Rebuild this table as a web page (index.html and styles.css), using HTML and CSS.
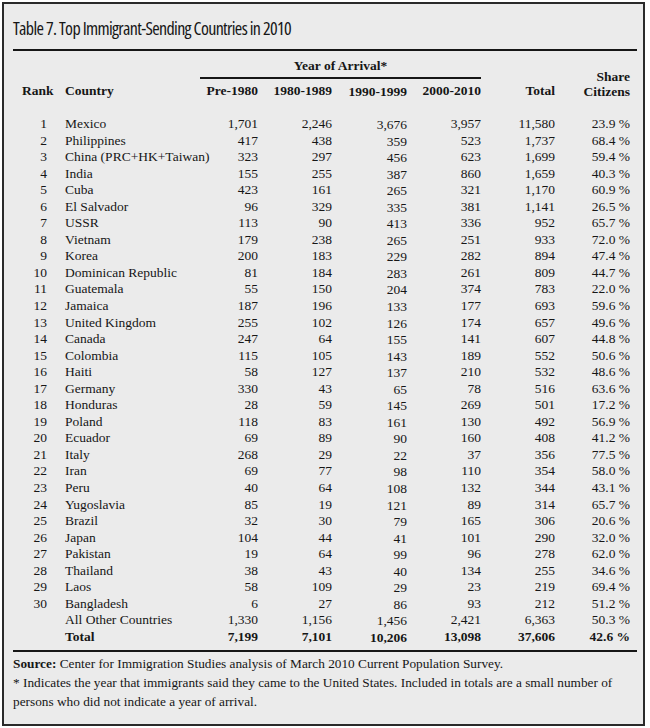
FILE: index.html
```html
<!DOCTYPE html>
<html lang="en">
<head>
<meta charset="utf-8">
<title>Table 7</title>
<link rel="stylesheet" href="styles.css">
</head>
<body>
<div class="frame">
  <h1 class="title">Table 7. Top Immigrant-Sending Countries in 2010</h1>
  <table class="data">
    <colgroup>
      <col class="w-rank"><col class="w-country"><col class="w-pre"><col class="w-80"><col class="w-90"><col class="w-00"><col class="w-total"><col class="w-share">
    </colgroup>
    <thead>
      <tr>
        <th rowspan="2" class="rank">Rank</th>
        <th rowspan="2" class="country">Country</th>
        <th colspan="4" class="yoa">Year of Arrival*</th>
        <th rowspan="2" class="num">Total</th>
        <th rowspan="2" class="num share">Share<br>Citizens</th>
      </tr>
      <tr class="sub">
        <th class="num">Pre-1980</th>
        <th class="num">1980-1989</th>
        <th class="num c90">1990-1999</th>
        <th class="num">2000-2010</th>
      </tr>
    </thead>
    <tbody>
      <tr><td class="rank">1</td><td class="country">Mexico</td><td class="num">1,701</td><td class="num">2,246</td><td class="num c90">3,676</td><td class="num">3,957</td><td class="num">11,580</td><td class="num share">23.9 %</td></tr>
      <tr><td class="rank">2</td><td class="country">Philippines</td><td class="num">417</td><td class="num">438</td><td class="num c90">359</td><td class="num">523</td><td class="num">1,737</td><td class="num share">68.4 %</td></tr>
      <tr><td class="rank">3</td><td class="country">China (PRC+HK+Taiwan)</td><td class="num">323</td><td class="num">297</td><td class="num c90">456</td><td class="num">623</td><td class="num">1,699</td><td class="num share">59.4 %</td></tr>
      <tr><td class="rank">4</td><td class="country">India</td><td class="num">155</td><td class="num">255</td><td class="num c90">387</td><td class="num">860</td><td class="num">1,659</td><td class="num share">40.3 %</td></tr>
      <tr><td class="rank">5</td><td class="country">Cuba</td><td class="num">423</td><td class="num">161</td><td class="num c90">265</td><td class="num">321</td><td class="num">1,170</td><td class="num share">60.9 %</td></tr>
      <tr><td class="rank">6</td><td class="country">El Salvador</td><td class="num">96</td><td class="num">329</td><td class="num c90">335</td><td class="num">381</td><td class="num">1,141</td><td class="num share">26.5 %</td></tr>
      <tr><td class="rank">7</td><td class="country">USSR</td><td class="num">113</td><td class="num">90</td><td class="num c90">413</td><td class="num">336</td><td class="num">952</td><td class="num share">65.7 %</td></tr>
      <tr><td class="rank">8</td><td class="country">Vietnam</td><td class="num">179</td><td class="num">238</td><td class="num c90">265</td><td class="num">251</td><td class="num">933</td><td class="num share">72.0 %</td></tr>
      <tr><td class="rank">9</td><td class="country">Korea</td><td class="num">200</td><td class="num">183</td><td class="num c90">229</td><td class="num">282</td><td class="num">894</td><td class="num share">47.4 %</td></tr>
      <tr><td class="rank">10</td><td class="country">Dominican Republic</td><td class="num">81</td><td class="num">184</td><td class="num c90">283</td><td class="num">261</td><td class="num">809</td><td class="num share">44.7 %</td></tr>
      <tr><td class="rank">11</td><td class="country">Guatemala</td><td class="num">55</td><td class="num">150</td><td class="num c90">204</td><td class="num">374</td><td class="num">783</td><td class="num share">22.0 %</td></tr>
      <tr><td class="rank">12</td><td class="country">Jamaica</td><td class="num">187</td><td class="num">196</td><td class="num c90">133</td><td class="num">177</td><td class="num">693</td><td class="num share">59.6 %</td></tr>
      <tr><td class="rank">13</td><td class="country">United Kingdom</td><td class="num">255</td><td class="num">102</td><td class="num c90">126</td><td class="num">174</td><td class="num">657</td><td class="num share">49.6 %</td></tr>
      <tr><td class="rank">14</td><td class="country">Canada</td><td class="num">247</td><td class="num">64</td><td class="num c90">155</td><td class="num">141</td><td class="num">607</td><td class="num share">44.8 %</td></tr>
      <tr><td class="rank">15</td><td class="country">Colombia</td><td class="num">115</td><td class="num">105</td><td class="num c90">143</td><td class="num">189</td><td class="num">552</td><td class="num share">50.6 %</td></tr>
      <tr><td class="rank">16</td><td class="country">Haiti</td><td class="num">58</td><td class="num">127</td><td class="num c90">137</td><td class="num">210</td><td class="num">532</td><td class="num share">48.6 %</td></tr>
      <tr><td class="rank">17</td><td class="country">Germany</td><td class="num">330</td><td class="num">43</td><td class="num c90">65</td><td class="num">78</td><td class="num">516</td><td class="num share">63.6 %</td></tr>
      <tr><td class="rank">18</td><td class="country">Honduras</td><td class="num">28</td><td class="num">59</td><td class="num c90">145</td><td class="num">269</td><td class="num">501</td><td class="num share">17.2 %</td></tr>
      <tr><td class="rank">19</td><td class="country">Poland</td><td class="num">118</td><td class="num">83</td><td class="num c90">161</td><td class="num">130</td><td class="num">492</td><td class="num share">56.9 %</td></tr>
      <tr><td class="rank">20</td><td class="country">Ecuador</td><td class="num">69</td><td class="num">89</td><td class="num c90">90</td><td class="num">160</td><td class="num">408</td><td class="num share">41.2 %</td></tr>
      <tr><td class="rank">21</td><td class="country">Italy</td><td class="num">268</td><td class="num">29</td><td class="num c90">22</td><td class="num">37</td><td class="num">356</td><td class="num share">77.5 %</td></tr>
      <tr><td class="rank">22</td><td class="country">Iran</td><td class="num">69</td><td class="num">77</td><td class="num c90">98</td><td class="num">110</td><td class="num">354</td><td class="num share">58.0 %</td></tr>
      <tr><td class="rank">23</td><td class="country">Peru</td><td class="num">40</td><td class="num">64</td><td class="num c90">108</td><td class="num">132</td><td class="num">344</td><td class="num share">43.1 %</td></tr>
      <tr><td class="rank">24</td><td class="country">Yugoslavia</td><td class="num">85</td><td class="num">19</td><td class="num c90">121</td><td class="num">89</td><td class="num">314</td><td class="num share">65.7 %</td></tr>
      <tr><td class="rank">25</td><td class="country">Brazil</td><td class="num">32</td><td class="num">30</td><td class="num c90">79</td><td class="num">165</td><td class="num">306</td><td class="num share">20.6 %</td></tr>
      <tr><td class="rank">26</td><td class="country">Japan</td><td class="num">104</td><td class="num">44</td><td class="num c90">41</td><td class="num">101</td><td class="num">290</td><td class="num share">32.0 %</td></tr>
      <tr><td class="rank">27</td><td class="country">Pakistan</td><td class="num">19</td><td class="num">64</td><td class="num c90">99</td><td class="num">96</td><td class="num">278</td><td class="num share">62.0 %</td></tr>
      <tr><td class="rank">28</td><td class="country">Thailand</td><td class="num">38</td><td class="num">43</td><td class="num c90">40</td><td class="num">134</td><td class="num">255</td><td class="num share">34.6 %</td></tr>
      <tr><td class="rank">29</td><td class="country">Laos</td><td class="num">58</td><td class="num">109</td><td class="num c90">29</td><td class="num">23</td><td class="num">219</td><td class="num share">69.4 %</td></tr>
      <tr><td class="rank">30</td><td class="country">Bangladesh</td><td class="num">6</td><td class="num">27</td><td class="num c90">86</td><td class="num">93</td><td class="num">212</td><td class="num share">51.2 %</td></tr>
      <tr><td class="rank"></td><td class="country">All Other Countries</td><td class="num">1,330</td><td class="num">1,156</td><td class="num c90">1,456</td><td class="num">2,421</td><td class="num">6,363</td><td class="num share">50.3 %</td></tr>
      <tr class="total"><td class="rank"></td><td class="country">Total</td><td class="num">7,199</td><td class="num">7,101</td><td class="num c90">10,206</td><td class="num">13,098</td><td class="num">37,606</td><td class="num share">42.6 %</td></tr>
    </tbody>
  </table>
  <div class="notes">
    <p class="note"><b>Source:</b> Center for Immigration Studies analysis of March 2010 Current Population Survey.</p>
    <p class="note">* Indicates the year that immigrants said they came to the United States. Included in totals are a small number of persons who did not indicate a year of arrival.</p>
  </div>
</div>
</body>
</html>
```

FILE: styles.css
```css
html, body {
  margin: 0;
  padding: 0;
  background: #ffffff;
}

.frame {
  margin: 2px 5px 2px 2px;
  height: 724px;
  box-sizing: border-box;
  border: 2px solid #2a2a2a;
  background: #ebebeb;
  padding: 13px 6px 0 9px;
  color: #161616;
  font-family: "Liberation Serif", "Times New Roman", serif;
}

.title {
  margin: 0;
  padding-bottom: 10px;
  border-bottom: 2px solid #161616;
  font-family: "Open Sans", "Liberation Sans", sans-serif;
  font-stretch: 75%;
  font-weight: normal;
  font-size: 18px;
  letter-spacing: -0.65px;
  line-height: 22px;
  color: #161616;
}

.data {
  width: 624px;
  border-collapse: collapse;
  table-layout: fixed;
  font-size: 13.5px;
}

.w-rank { width: 42px; }
.w-country { width: 145px; }
.w-pre { width: 58px; }
.w-80 { width: 74px; }
.w-90 { width: 75px; }
.w-00 { width: 74px; }
.w-total { width: 74px; }
.w-share { width: 82px; }

.data th {
  font-weight: bold;
  line-height: 16px;
  padding: 4px 0 17px;
  vertical-align: bottom;
  white-space: nowrap;
}

.data th.rank {
  text-align: left;
  padding-left: 9px;
}

.data th.country {
  text-align: left;
  padding-left: 10px;
}

.data th.yoa {
  text-align: center;
  padding: 7px 0 3px;
  border-bottom: 2px solid #161616;
}

.data th.share {
  line-height: 15px;
}

.data th.num { text-align: right; }

.data th.c90 {
  padding-top: 5px;
  padding-bottom: 16px;
}

.data td {
  padding: 0;
  line-height: 16.55px;
  white-space: nowrap;
  vertical-align: top;
}

.data td.rank {
  text-align: right;
  padding-right: 8px;
}

.data td.country {
  text-align: left;
  padding-left: 10px;
}

.data td.num { text-align: right; }

.data td.c90 {
  padding-top: 1px;
  line-height: 15.55px;
}

.data .share { padding-right: 7px; }

.total td { font-weight: bold; }

.notes {
  margin-top: 4px;
  padding-top: 2px;
  border-top: 2px solid #161616;
  font-size: 13.3px;
  line-height: 19px;
}

.note { margin: 0; }
```
